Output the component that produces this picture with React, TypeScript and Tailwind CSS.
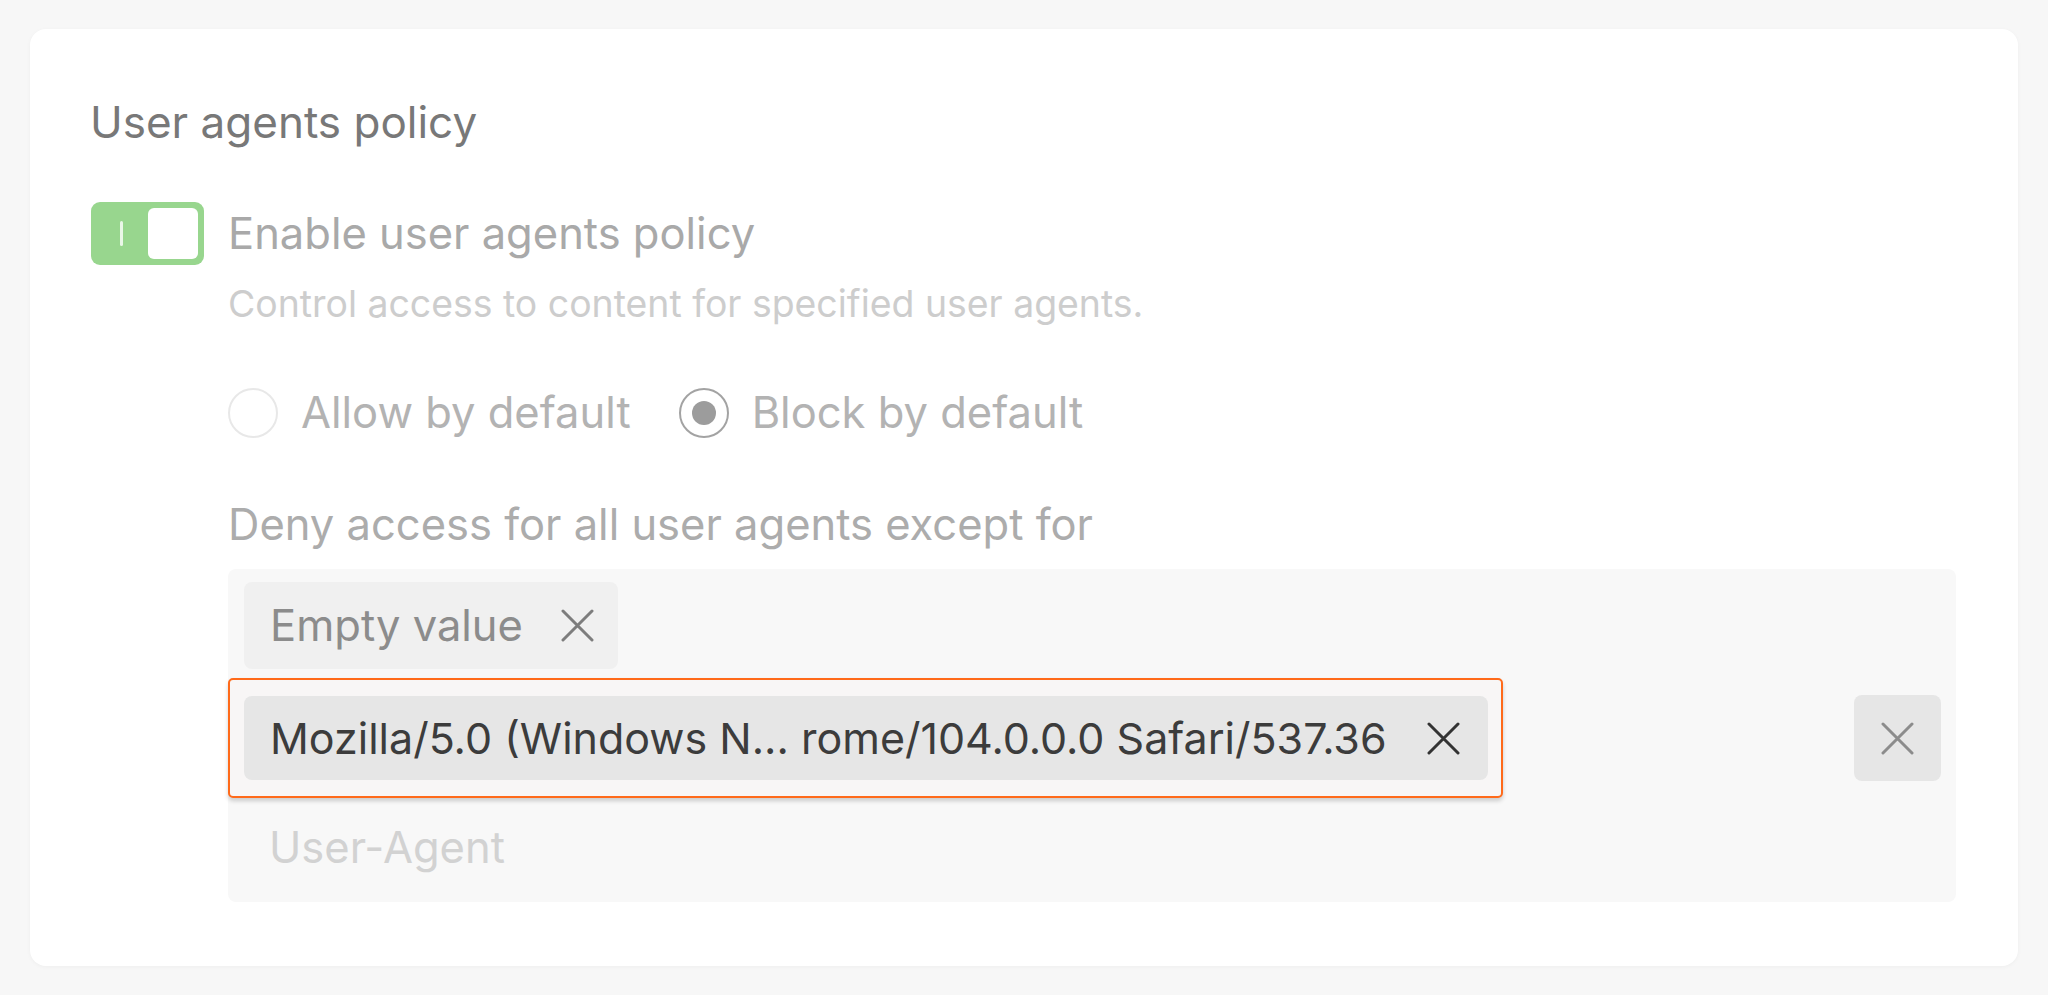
import React from "react";

function Cross({ size = 33, color = "#7a7a7a", width = 3 }: { size?: number; color?: string; width?: number }) {
  return (
    <svg width={size} height={size} viewBox="0 0 33 33" fill="none">
      <path d="M2 2 L31 31 M31 2 L2 31" stroke={color} strokeWidth={width} strokeLinecap="round" />
    </svg>
  );
}

function Radio({ checked, label }: { checked?: boolean; label: string }) {
  return (
    <div className="flex items-center gap-[23px]">
      <div
        className={
          checked
            ? "w-[50px] h-[50px] rounded-full border-[2px] border-[#a3a3a3] flex items-center justify-center"
            : "w-[50px] h-[50px] rounded-full border-[2px] border-[#e8e8e8]"
        }
      >
        {checked && <div className="w-[24px] h-[24px] rounded-full bg-[#9c9c9c]" />}
      </div>
      <span className="text-[43.5px] text-[#b3b3b3]">{label}</span>
    </div>
  );
}

export default function App() {
  return (
    <div className="min-h-screen bg-[#f7f7f7] pt-[29px] pl-[30px] pr-[30px] font-['Inter',sans-serif]">
      <div className="w-[1988px] h-[937px] bg-white rounded-[16px] shadow-[0_1px_4px_rgba(0,0,0,0.04)] pt-[63px] pl-[60px] pr-[63px]">
        {/* title */}
        <div className="h-[60px] flex items-center text-[44px] text-[#787878]">User agents policy</div>

        {/* toggle row */}
        <div className="mt-[50px] flex gap-[24px]">
          <div className="relative w-[113px] h-[63px] rounded-[9px] bg-[#98d68e] shrink-0 ml-[1px]">
            <div className="absolute left-[29px] top-[19px] w-[3px] h-[25px] rounded-full bg-white/80" />
            <div className="absolute right-[6px] top-[6px] w-[50px] h-[51px] rounded-[6px] bg-white" />
          </div>
          <div className="flex-1">
            <div className="h-[63px] flex items-center text-[43.5px] text-[#a9a9a9]">Enable user agents policy</div>
            <div className="mt-[17px] h-[44px] flex items-center text-[37.4px] text-[#cdcdcd]">
              Control access to content for specified user agents.
            </div>

            {/* radios */}
            <div className="mt-[62px] h-[50px] flex items-center gap-[48px]">
              <Radio label="Allow by default" />
              <Radio checked label="Block by default" />
            </div>

            <div className="mt-[62px] h-[50px] flex items-center text-[43.5px] text-[#acacac]">
              Deny access for all user agents except for
            </div>

            {/* list box */}
            <div className="mt-[19px] w-[1728px] h-[333px] bg-[#f8f8f8] rounded-[8px] pt-[13px]">
              <div className="pl-[16px]">
                <div className="w-[374px] h-[87px] rounded-[8px] bg-[#f0f0f0] pl-[26px] pr-[24px] flex items-center justify-between">
                  <span className="text-[43.5px] text-[#8c8c8c]">Empty value</span>
                  <Cross color="#7d7d7d" />
                </div>
              </div>

              <div className="mt-[9px] flex items-center justify-between pr-[15px]">
                <div className="w-[1275px] h-[120px] border-[2px] border-[#ff6a1a] rounded-[5px] bg-[#f8f6f6] shadow-[0_3px_4px_rgba(0,0,0,0.18)] pl-[14px] pr-[13px] py-[16px]">
                  <div className="h-full rounded-[8px] bg-[#e6e6e6] pl-[26px] pr-[28px] flex items-center justify-between">
                    <span className="text-[43px] text-[#3c3c3c] whitespace-nowrap">
                      Mozilla/5.0 (Windows N... rome/104.0.0.0 Safari/537.36
                    </span>
                    <Cross color="#333333" />
                  </div>
                </div>
                <div className="w-[87px] h-[86px] rounded-[8px] bg-[#e6e6e6] flex items-center justify-center">
                  <Cross color="#8c8c8c" />
                </div>
              </div>

              <div className="h-[100px] flex items-center pl-[41px] text-[43.5px] text-[#d2d2d2]">User-Agent</div>
            </div>
          </div>
        </div>
      </div>
    </div>
  );
}
